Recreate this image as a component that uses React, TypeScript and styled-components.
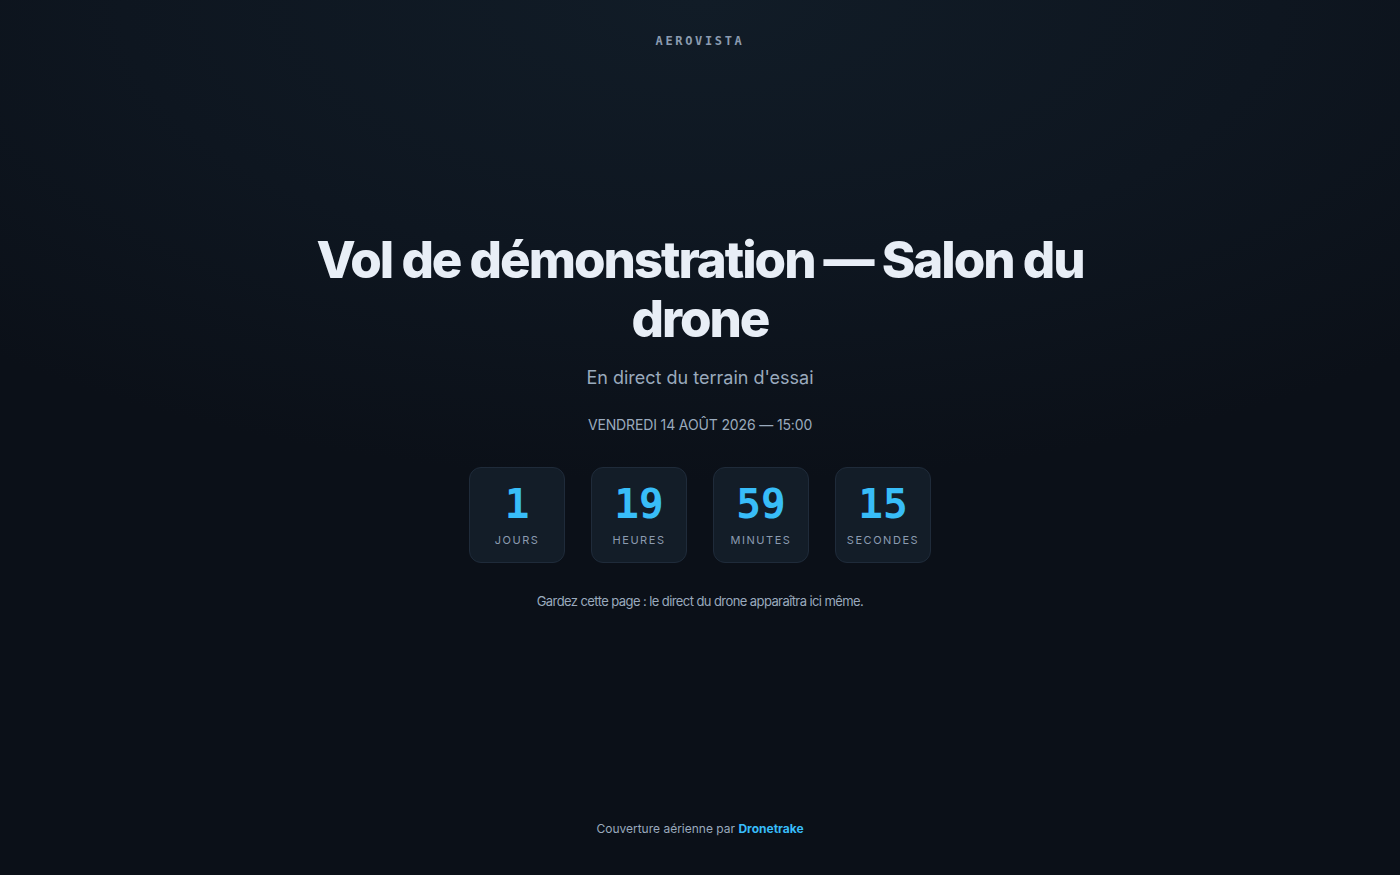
import React from "react";
import styled, { createGlobalStyle } from "styled-components";

const GlobalStyle = createGlobalStyle`
  html, body {
    margin: 0;
    padding: 0;
    background: #0b1018;
  }
  body {
    font-family: Inter, "Noto Sans", "Liberation Sans", sans-serif;
    -webkit-font-smoothing: antialiased;
  }
`;

const Page = styled.div`
  height: 875px;
  box-sizing: border-box;
  display: flex;
  flex-direction: column;
  align-items: center;
  background: radial-gradient(ellipse 75% 55% at 50% 0%, #111c27 0%, #0e1620 55%, #0b1018 100%);
  color: #e6edf5;
`;

const Brand = styled.header`
  padding-top: 34px;
  font-family: "DejaVu Sans Mono", "Liberation Mono", monospace;
  font-weight: 700;
  font-size: 12px;
  letter-spacing: 0.22em;
  color: #8b9bb0;
  line-height: 14px;
`;

const Main = styled.main`
  flex: 1;
  display: flex;
  flex-direction: column;
  align-items: center;
  justify-content: center;
  text-align: center;
  padding-bottom: 30px;
`;

const Title = styled.h1`
  margin: 0;
  max-width: 800px;
  font-size: 51px;
  font-weight: 800;
  line-height: 59px;
  letter-spacing: -0.04em;
  color: #e8eef6;
`;

const Subtitle = styled.p`
  margin: 17px 0 0;
  font-size: 18px;
  line-height: 26px;
  color: #9aaabd;
`;

const DateLine = styled.p`
  margin: 24px 0 0;
  font-size: 14px;
  line-height: 20px;
  letter-spacing: -0.01em;
  text-transform: uppercase;
  color: #9aaabd;
`;

const Countdown = styled.div`
  margin-top: 32px;
  display: flex;
  gap: 26px;
`;

const Unit = styled.div`
  width: 96px;
  height: 96px;
  box-sizing: border-box;
  border: 1px solid #1f2b3a;
  border-radius: 12px;
  background: #131d28;
  display: flex;
  flex-direction: column;
  align-items: center;
  justify-content: center;
`;

const Value = styled.span`
  font-family: "DejaVu Sans Mono", "Liberation Mono", monospace;
  font-weight: 700;
  font-size: 41px;
  line-height: 44px;
  color: #38bdf8;
`;

const Label = styled.span`
  margin-top: 7px;
  font-size: 11px;
  line-height: 14px;
  letter-spacing: 0.14em;
  text-transform: uppercase;
  color: #8b9bb0;
`;

const Note = styled.p`
  margin: 29px 0 0;
  font-size: 13px;
  line-height: 18px;
  letter-spacing: -0.045em;
  color: #9aaabd;
`;

const Footer = styled.footer`
  padding-bottom: 38px;
  font-size: 12px;
  line-height: 16px;
  color: #9aaabd;
`;

const Sponsor = styled.a`
  color: #38bdf8;
  font-weight: 700;
  text-decoration: none;
`;

const units = [
  { value: "1", label: "Jours" },
  { value: "19", label: "Heures" },
  { value: "59", label: "Minutes" },
  { value: "15", label: "Secondes" },
];

const App: React.FC = () => (
  <>
    <GlobalStyle />
    <Page>
      <Brand>AEROVISTA</Brand>
      <Main>
        <Title>Vol de démonstration — Salon du drone</Title>
        <Subtitle>En direct du terrain d'essai</Subtitle>
        <DateLine>Vendredi 14 août 2026 — 15:00</DateLine>
        <Countdown>
          {units.map((u) => (
            <Unit key={u.label}>
              <Value>{u.value}</Value>
              <Label>{u.label}</Label>
            </Unit>
          ))}
        </Countdown>
        <Note>Gardez cette page : le direct du drone apparaîtra ici même.</Note>
      </Main>
      <Footer>
        Couverture aérienne par <Sponsor href="#">Dronetrake</Sponsor>
      </Footer>
    </Page>
  </>
);

export default App;
